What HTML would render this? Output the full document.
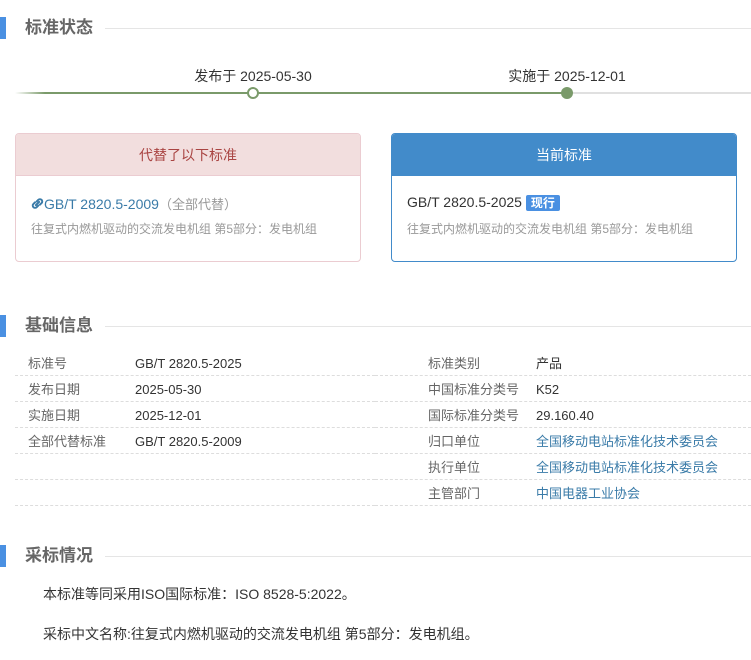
<!DOCTYPE html>
<html><head><meta charset="utf-8"><style>
*{margin:0;padding:0;box-sizing:border-box}
body{width:751px;height:660px;background:#fff;font-family:"Liberation Sans","Noto Sans CJK SC",sans-serif;position:relative;overflow:hidden;color:#333}
.a{position:absolute}
.h{position:absolute;left:0;height:22px;width:751px}
.h .bar{position:absolute;left:0;top:0;width:6px;height:22px;background:#4a90e2}
.h .t{position:absolute;left:25px;top:0px;font-size:17px;font-weight:bold;color:#666;line-height:22px}
.h .ln{position:absolute;left:105px;right:0;top:11px;border-top:1px solid #e5e5e5}
.box{position:absolute;top:133px;width:346px;height:129px;border-radius:4px;overflow:hidden}
.box .hd{height:42px;line-height:42px;text-align:center;font-size:14px}
.sm{font-size:12px;color:#999}
.row{position:absolute;height:26px;border-bottom:1px dashed #ddd;font-size:13px;line-height:28px}
.lb{position:absolute;color:#666}
.lk{color:#3a7ba8}
</style></head><body>
<div class="h" style="top:17px"><div class="bar"></div><div class="t">标准状态</div><div class="ln"></div></div>
<div class="a" style="left:15px;top:92px;width:552px;height:2px;background:linear-gradient(to right,#fff,#7a9a6a 30px)"></div>
<div class="a" style="left:567px;top:92px;width:184px;height:2px;background:#e0e0e0"></div>
<div class="a" style="left:247px;top:87px;width:12px;height:12px;border-radius:50%;border:2px solid #7a9a6a;background:#fff"></div>
<div class="a" style="left:561px;top:87px;width:12px;height:12px;border-radius:50%;background:#7a9a6a"></div>
<div class="a" style="left:153px;width:200px;text-align:center;top:66px;font-size:14px">发布于 2025-05-30</div>
<div class="a" style="left:467px;width:200px;text-align:center;top:66px;font-size:14px">实施于 2025-12-01</div>

<div class="box" style="left:15px;border:1px solid #ebccd1">
<div class="hd" style="background:#f2dede;color:#a94442;border-bottom:1px solid #ebccd1">代替了以下标准</div>
<div class="a" style="left:15px;top:60px;font-size:14px;color:#3a7ba8"><svg width="13" height="13" viewBox="0 0 16 16" style="vertical-align:-1px"><g fill="none" stroke="#3a7ba8" stroke-width="2.4" stroke-linecap="round"><path d="M7 5.5l2-2a2.8 2.8 0 0 1 4 4l-2 2"/><path d="M9 10.5l-2 2a2.8 2.8 0 0 1-4-4l2-2"/><path d="M6 10l4-4"/></g></svg>GB/T 2820.5-2009<span class="sm" style="font-size:13px">（全部代替）</span></div>
<div class="a sm" style="left:15px;top:86px">往复式内燃机驱动的交流发电机组 第5部分：发电机组</div>
</div>
<div class="box" style="left:391px;border:1px solid #428bca">
<div class="hd" style="background:#428bca;color:#fff">当前标准</div>
<div class="a" style="left:15px;top:60px;font-size:14px;color:#333">GB/T 2820.5-2025 <span style="background:#4a90e2;color:#fff;font-weight:bold;font-size:12px;padding:1px 5px;border-radius:2px">现行</span></div>
<div class="a sm" style="left:15px;top:86px">往复式内燃机驱动的交流发电机组 第5部分：发电机组</div>
</div>

<div class="h" style="top:315px"><div class="bar"></div><div class="t">基础信息</div><div class="ln"></div></div>
<div class="row" style="left:15px;width:360px;top:350px"><span class="lb" style="left:13px">标准号</span><span class="a" style="left:120px">GB/T 2820.5-2025</span></div>
<div class="row" style="left:15px;width:360px;top:376px"><span class="lb" style="left:13px">发布日期</span><span class="a" style="left:120px">2025-05-30</span></div>
<div class="row" style="left:15px;width:360px;top:402px"><span class="lb" style="left:13px">实施日期</span><span class="a" style="left:120px">2025-12-01</span></div>
<div class="row" style="left:15px;width:360px;top:428px"><span class="lb" style="left:13px">全部代替标准</span><span class="a" style="left:120px">GB/T 2820.5-2009</span></div>
<div class="row" style="left:15px;width:360px;top:454px"></div>
<div class="row" style="left:15px;width:360px;top:480px"></div>
<div class="row" style="left:375px;width:376px;top:350px"><span class="lb" style="left:53px">标准类别</span><span class="a" style="left:161px">产品</span></div>
<div class="row" style="left:375px;width:376px;top:376px"><span class="lb" style="left:53px">中国标准分类号</span><span class="a" style="left:161px">K52</span></div>
<div class="row" style="left:375px;width:376px;top:402px"><span class="lb" style="left:53px">国际标准分类号</span><span class="a" style="left:161px">29.160.40</span></div>
<div class="row" style="left:375px;width:376px;top:428px"><span class="lb" style="left:53px">归口单位</span><span class="a lk" style="left:161px">全国移动电站标准化技术委员会</span></div>
<div class="row" style="left:375px;width:376px;top:454px"><span class="lb" style="left:53px">执行单位</span><span class="a lk" style="left:161px">全国移动电站标准化技术委员会</span></div>
<div class="row" style="left:375px;width:376px;top:480px"><span class="lb" style="left:53px">主管部门</span><span class="a lk" style="left:161px">中国电器工业协会</span></div>

<div class="h" style="top:545px"><div class="bar"></div><div class="t">采标情况</div><div class="ln"></div></div>
<div class="a" style="left:43px;top:584px;font-size:14px">本标准等同采用ISO国际标准：ISO 8528-5:2022。</div>
<div class="a" style="left:43px;top:624px;font-size:14px">采标中文名称:往复式内燃机驱动的交流发电机组 第5部分：发电机组。</div>
</body></html>
